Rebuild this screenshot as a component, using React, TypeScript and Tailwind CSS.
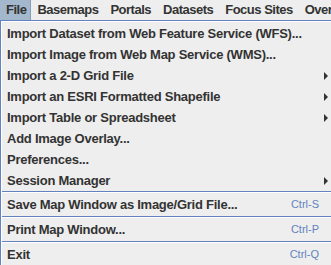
import React from 'react';

const topMenus = ['File', 'Basemaps', 'Portals', 'Datasets', 'Focus Sites', 'Overlays'];

type Item = { label: string; sub?: boolean; accel?: string; sep?: boolean };

const items: Item[] = [
  { label: 'Import Dataset from Web Feature Service (WFS)...' },
  { label: 'Import Image from Web Map Service (WMS)...' },
  { label: 'Import a 2-D Grid File', sub: true },
  { label: 'Import an ESRI Formatted Shapefile', sub: true },
  { label: 'Import Table or Spreadsheet', sub: true },
  { label: 'Add Image Overlay...' },
  { label: 'Preferences...' },
  { label: 'Session Manager', sub: true },
  { label: 'Save Map Window as Image/Grid File...', accel: 'Ctrl-S', sep: true },
  { label: 'Print Map Window...', accel: 'Ctrl-P', sep: true },
  { label: 'Exit', accel: 'Ctrl-Q', sep: true },
];

function Arrow() {
  return (
    <svg width="4" height="8" viewBox="0 0 4 8" className="shrink-0">
      <path d="M0 0 L4 4 L0 8 Z" fill="#333333" />
    </svg>
  );
}

function App() {
  return (
    <div
      className="w-[331px] h-[265px] overflow-hidden bg-[#eeeeee] text-[#333333]"
      style={{ fontFamily: '"Liberation Sans", Arial, sans-serif' }}
    >
      <div className="flex h-[20px] items-stretch text-[13px] font-bold tracking-[-0.5px] whitespace-nowrap">
        {topMenus.map((m, i) => (
          <div
            key={m}
            className={
              i === 0
                ? 'flex items-center pl-[6px] pr-[4px] bg-[#a3b8cc] border-r border-[#8a9fb5]'
                : 'flex items-center px-[6px]'
            }
          >
            {m}
          </div>
        ))}
      </div>
      <div className="border-t border-l border-[#6382bf] h-[245px]">
        <div className="border-t border-l border-white h-full pt-px">
          {items.map((it) => (
            <div key={it.label}>
              {it.sep && (
                <div>
                  <div className="h-px bg-[#6382bf]" />
                  <div className="h-px bg-white" />
                </div>
              )}
              <div
                className={
                  (it.accel ? 'h-[23px] ' : 'h-[21px] ') +
                  'flex items-center pl-[5px] pr-[3px] text-[13px] font-bold tracking-[-0.25px] whitespace-nowrap'
                }
              >
                <span className="flex-1">{it.label}</span>
                {it.accel && (
                  <span className="text-[11px] font-normal tracking-normal text-[#6382bf] mr-[9px]">{it.accel}</span>
                )}
                {it.sub && <Arrow />}
              </div>
            </div>
          ))}
        </div>
      </div>
    </div>
  );
}

export default App;
